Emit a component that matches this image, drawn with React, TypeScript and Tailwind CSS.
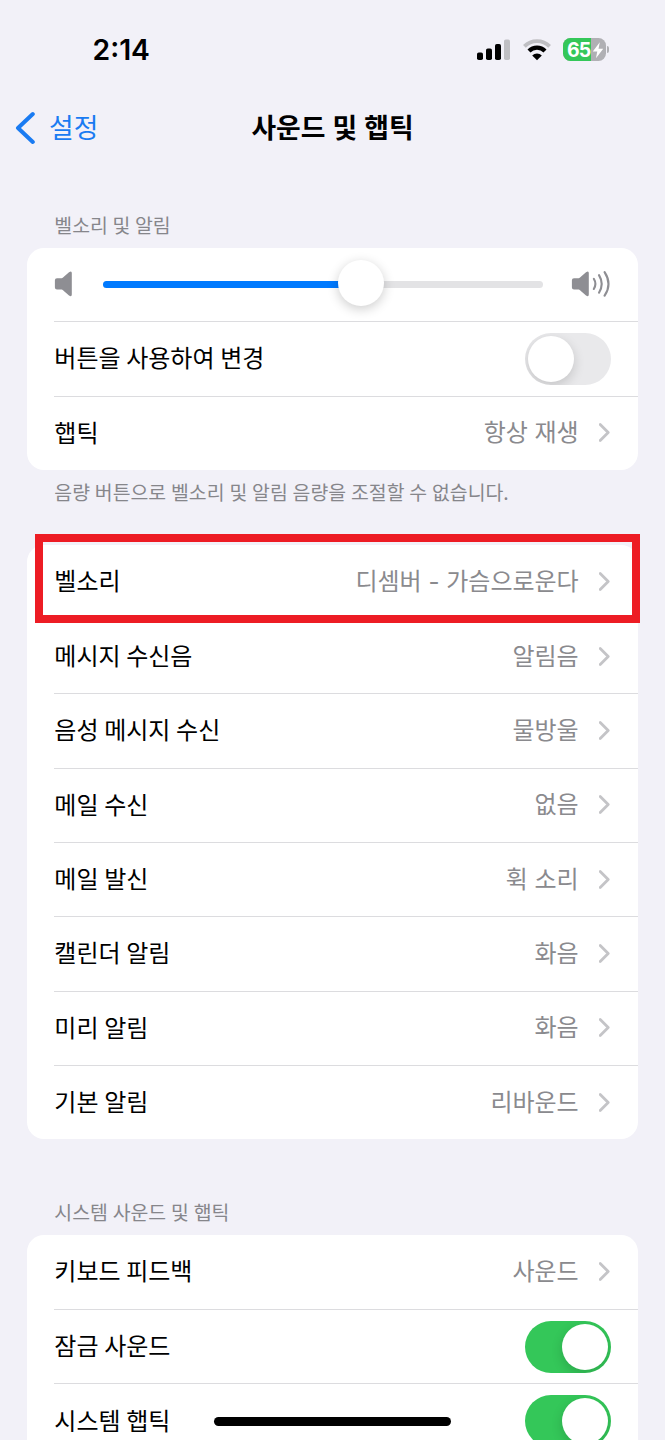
import { useState } from 'react';

interface ToneRow {
  label: string;
  value: string;
}

const toneRows: ToneRow[] = [
  { label: '벨소리', value: '디셈버 - 가슴으로운다' },
  { label: '메시지 수신음', value: '알림음' },
  { label: '음성 메시지 수신', value: '물방울' },
  { label: '메일 수신', value: '없음' },
  { label: '메일 발신', value: '휙 소리' },
  { label: '캘린더 알림', value: '화음' },
  { label: '미리 알림', value: '화음' },
  { label: '기본 알림', value: '리바운드' },
];

function StatusBar() {
  return (
    <div className="flex h-[100px] items-center justify-between pl-[92.5px] pr-[56px]">
      <span className="font-['Inter',sans-serif] text-[28.3px] font-semibold leading-none text-black">
        2:14
      </span>
      <div className="flex items-center pb-px">
        <svg width="34" height="22" viewBox="0 0 34 22" className="mr-[12px]">
          <rect x="0" y="13.5" width="6" height="7.5" rx="1.8" fill="#000" />
          <rect x="9" y="9.5" width="6" height="11.5" rx="1.8" fill="#000" />
          <rect x="18" y="5" width="6" height="16" rx="1.8" fill="#000" />
          <rect x="27" y="0.5" width="6" height="20.5" rx="1.8" fill="#bfbfc3" />
        </svg>
        <svg width="28" height="22" viewBox="0 0 28 22" className="mr-[12px]">
          <path d="M1.4 7.4 A17.5 17.5 0 0 1 26.6 7.4" fill="none" stroke="#bfbfc3" strokeWidth="3.8" />
          <path d="M6 12 A11.1 11.1 0 0 1 22 12" fill="none" stroke="#000" strokeWidth="4.2" />
          <path d="M14 21.2 L9.2 16.4 A6.8 6.8 0 0 1 18.8 16.4 Z" fill="#000" />
        </svg>
        <div className="relative flex h-[23px] w-[43px] items-center overflow-hidden rounded-[7.5px] bg-[#b0b0b4]">
          <div className="absolute inset-y-0 left-0 w-[28px] bg-[#34c759]" />
          <span className="relative ml-[4px] pt-[2px] font-['Inter',sans-serif] text-[19.5px] font-bold leading-none tracking-[-0.8px] text-white">
            65
          </span>
          <svg width="12" height="17" viewBox="0 0 11 16" className="absolute right-[2px] top-[4px]">
            <path d="M7.2 0.3 L0.6 8.9 H4.8 L3.6 15.2 L10.4 6.4 H6 Z" fill="#fff" />
          </svg>
        </div>
        <div className="ml-[1px] h-[7px] w-[2px] rounded-r-full bg-[#b0b0b4]" />
      </div>
    </div>
  );
}

function NavBar() {
  return (
    <div className="relative flex h-[56px] items-center justify-center">
      <button className="absolute left-[15px] flex items-center text-[#1a7bf2]">
        <svg width="20" height="34" viewBox="0 0 20 34" fill="none">
          <path d="M17.8 3 L3 17 L17.8 31" stroke="currentColor" strokeWidth="4" strokeLinecap="round" strokeLinejoin="round" />
        </svg>
        <span className="ml-[14px] pb-[2px] text-[26.8px] leading-none">설정</span>
      </button>
      <h1 className="pb-[2px] text-[26.8px] font-semibold leading-none text-black [word-spacing:1px]">사운드 및 햅틱</h1>
    </div>
  );
}

function Chevron() {
  return (
    <svg width="12" height="20" viewBox="0 0 12 20" fill="none" className="ml-[20px]">
      <path d="M1.2 1.5 L9.2 9.5 L1.2 17.5" stroke="#c4c4c7" strokeWidth="2.8" strokeLinecap="round" strokeLinejoin="round" />
    </svg>
  );
}

function Speaker({ loud = false }: { loud?: boolean }) {
  return (
    <svg width={loud ? 40 : 19} height="28" viewBox={loud ? '0 0.8 40 28' : '0 0.8 19 28'} className="shrink-0">
      <path
        d="M3 8 H7.6 Q8.4 8 9 7.4 L15 2 Q17.8 0.2 17.8 2.8 V24.4 Q17.8 27 15 25.4 L9 20 Q8.4 19.4 7.6 19.4 H3 Q0.9 19.4 0.9 17.4 V10 Q0.9 8 3 8 Z"
        fill="#8e8e93"
      />
      {loud && (
        <g fill="none" stroke="#8e8e93" strokeWidth="2.1" strokeLinecap="round">
          <path d="M22.8 8.6 Q26 13.7 22.8 18.8" />
          <path d="M28 4.9 Q33.4 13.7 28 22.5" />
          <path d="M33.6 1.9 Q41.4 13.7 33.6 25.5" />
        </g>
      )}
    </svg>
  );
}

function Toggle({ initial = false }: { initial?: boolean }) {
  const [on, setOn] = useState(initial);
  return (
    <button
      role="switch"
      aria-checked={on}
      onClick={() => setOn(!on)}
      className={`flex h-[52px] w-[86px] items-center overflow-hidden rounded-full px-[3px] ${
        on ? 'justify-end bg-[#34c759]' : 'justify-start bg-[#e9e9eb]'
      }`}
    >
      <span className="h-[46px] w-[46px] rounded-full bg-white shadow-[0_4px_12px_rgba(0,0,0,0.16)]" />
    </button>
  );
}

interface RowProps {
  label: string;
  value?: string;
  first?: boolean;
  children?: React.ReactNode;
}

function Row({ label, value, first = false, children }: RowProps) {
  return (
    <div
      className={`ml-[27px] flex h-[74.33px] items-center justify-between pr-[27px] ${
        first ? '' : 'border-t border-[#dcdcdf]'
      }`}
    >
      <span className="pb-[3px] text-[24px] leading-none text-black [word-spacing:0.3px]">{label}</span>
      {value ? (
        <div className="flex items-center">
          <span className="font-['Inter','Noto_Sans_CJK_KR',sans-serif] text-[24px] leading-none text-[#8a8a8e]">
            {value}
          </span>
          <Chevron />
        </div>
      ) : (
        children
      )}
    </div>
  );
}

export default function App() {
  return (
    <div className="relative h-[1440px] w-[665px] overflow-hidden bg-[#f2f1f8] font-['Noto_Sans_CJK_KR',sans-serif]">
      <StatusBar />
      <NavBar />

      <main className="px-[27.3px]">
        <h2 className="flex h-[92px] items-end pb-[14px] pl-[27px] text-[19.4px] leading-none text-[#86868b] [word-spacing:0.3px]">
          벨소리 및 알림
        </h2>
        <section className="rounded-[17px] bg-white">
          {/* Volume slider */}
          <div className="ml-[27px] flex h-[73.3px] items-center pr-[27px]">
            <Speaker />
            <div className="relative ml-[30px] mr-[28px] h-[7px] flex-1 rounded-full bg-[#e3e3e5]">
              <div className="h-full w-[258px] rounded-full bg-[#007aff]" />
              <div className="absolute -top-[21px] left-[235px] h-[46px] w-[46px] rounded-full bg-white shadow-[0_3px_12px_rgba(0,0,0,0.2)]" />
            </div>
            <Speaker loud />
          </div>
          <Row label="버튼을 사용하여 변경">
            <Toggle />
          </Row>
          <Row label="햅틱" value="항상 재생" />
        </section>
        <p className="h-[74.7px] pl-[27px] pt-[12px] text-[19.4px] leading-none text-[#86868b] [word-spacing:0.5px]">
          음량 버튼으로 벨소리 및 알림 음량을 조절할 수 없습니다.
        </p>

        <section className="relative rounded-[17px] bg-white">
          {toneRows.map((row, i) => (
            <Row key={row.label} label={row.label} value={row.value} first={i === 0} />
          ))}
          {/* Highlight around the ringtone row */}
          <div className="absolute -top-[11px] left-[7.7px] h-[89px] w-[605px] border-8 border-[#ed1c24]" />
        </section>

        <h2 className="flex h-[95.5px] items-end pb-[13.5px] pl-[27px] text-[19.4px] leading-none text-[#86868b] [word-spacing:0.5px]">
          시스템 사운드 및 햅틱
        </h2>
        <section className="rounded-t-[17px] bg-white">
          <Row label="키보드 피드백" value="사운드" first />
          <Row label="잠금 사운드">
            <Toggle initial />
          </Row>
          <Row label="시스템 햅틱">
            <Toggle initial />
          </Row>
        </section>
      </main>

      {/* Home indicator */}
      <div className="absolute left-[214px] top-[1417px] h-[9px] w-[237px] rounded-full bg-black" />
    </div>
  );
}
